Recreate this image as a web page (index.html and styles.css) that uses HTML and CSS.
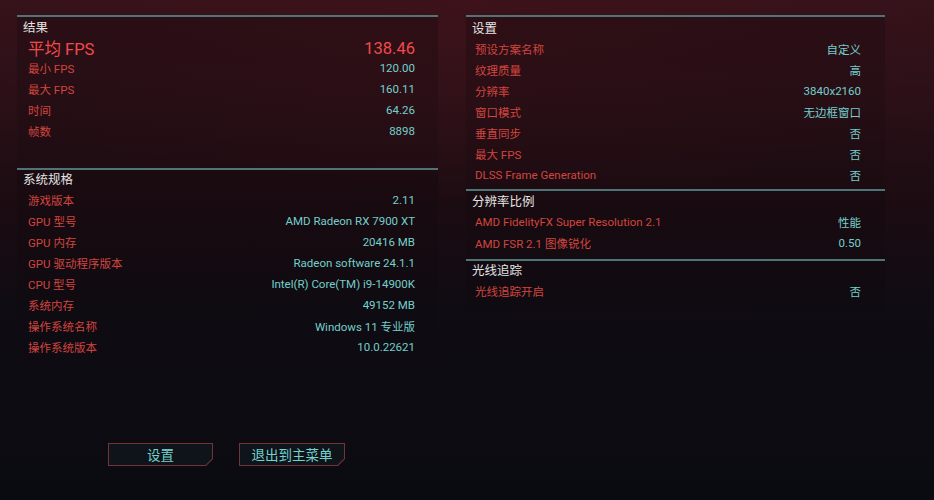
FILE: index.html
```html
<!DOCTYPE html>
<html lang="zh-CN">
<head>
<meta charset="utf-8">
<title>基准测试结果</title>
<link rel="stylesheet" href="styles.css">
</head>
<body>
<div class="page">
  <div class="columns">
    <div class="col col-left">
      <section class="sec sec-results">
        <div class="sec-head">结果</div>
        <div class="row row-big"><span class="lbl">平均 FPS</span><span class="val">138.46</span></div>
        <div class="row"><span class="lbl">最小 FPS</span><span class="val">120.00</span></div>
        <div class="row"><span class="lbl">最大 FPS</span><span class="val">160.11</span></div>
        <div class="row"><span class="lbl">时间</span><span class="val">64.26</span></div>
        <div class="row"><span class="lbl">帧数</span><span class="val">8898</span></div>
      </section>
      <section class="sec sec-specs">
        <div class="sec-head">系统规格</div>
        <div class="row"><span class="lbl">游戏版本</span><span class="val">2.11</span></div>
        <div class="row"><span class="lbl">GPU 型号</span><span class="val">AMD Radeon RX 7900 XT</span></div>
        <div class="row"><span class="lbl">GPU 内存</span><span class="val">20416 MB</span></div>
        <div class="row"><span class="lbl">GPU 驱动程序版本</span><span class="val">Radeon software 24.1.1</span></div>
        <div class="row"><span class="lbl">CPU 型号</span><span class="val">Intel(R) Core(TM) i9-14900K</span></div>
        <div class="row"><span class="lbl">系统内存</span><span class="val">49152 MB</span></div>
        <div class="row"><span class="lbl">操作系统名称</span><span class="val">Windows 11 专业版</span></div>
        <div class="row"><span class="lbl">操作系统版本</span><span class="val">10.0.22621</span></div>
      </section>
    </div>
    <div class="col col-right">
      <section class="sec sec-settings">
        <div class="sec-head">设置</div>
        <div class="row"><span class="lbl">预设方案名称</span><span class="val">自定义</span></div>
        <div class="row"><span class="lbl">纹理质量</span><span class="val">高</span></div>
        <div class="row"><span class="lbl">分辨率</span><span class="val">3840x2160</span></div>
        <div class="row"><span class="lbl">窗口模式</span><span class="val">无边框窗口</span></div>
        <div class="row"><span class="lbl">垂直同步</span><span class="val">否</span></div>
        <div class="row"><span class="lbl">最大 FPS</span><span class="val">否</span></div>
        <div class="row"><span class="lbl">DLSS Frame Generation</span><span class="val">否</span></div>
      </section>
      <section class="sec sec-scale">
        <div class="sec-head">分辨率比例</div>
        <div class="row"><span class="lbl">AMD FidelityFX Super Resolution 2.1</span><span class="val">性能</span></div>
        <div class="row"><span class="lbl">AMD FSR 2.1 图像锐化</span><span class="val">0.50</span></div>
      </section>
      <section class="sec sec-rt">
        <div class="sec-head">光线追踪</div>
        <div class="row"><span class="lbl">光线追踪开启</span><span class="val">否</span></div>
      </section>
    </div>
  </div>
  <div class="actions">
    <div class="btn"><span class="btn-in">设置</span></div>
    <div class="btn"><span class="btn-in">退出到主菜单</span></div>
  </div>
</div>
</body>
</html>
```
FILE: styles.css
```css
html, body {
  margin: 0;
  padding: 0;
  height: 100%;
}
body {
  background:
    radial-gradient(ellipse 70% 40% at 50% 0%, rgba(70, 18, 26, 0.55), rgba(70, 18, 26, 0) 100%),
    linear-gradient(180deg, #33121a 0%, #2a1017 18%, #1c0c12 40%, #0f0c13 62%, #0a0b11 100%);
  font-family: Roboto, "Noto Sans CJK SC", sans-serif;
  color: #e6e6e6;
  overflow: hidden;
}
.page {
  width: 934px;
  height: 500px;
  padding-top: 15px;
  box-sizing: border-box;
}
.columns {
  display: flex;
  gap: 28px;
  padding-left: 17px;
  height: 428px;
}
.col {
  display: flex;
  flex-direction: column;
}
.col-left { width: 421px; }
.col-right { width: 419px; }

.sec {
  border-top: 2px solid #4f7377;
  background: linear-gradient(180deg, rgba(12, 6, 10, 0.28), rgba(12, 6, 10, 0.12));
}
.sec-results { padding-bottom: 26px; }
.sec-specs { padding-bottom: 8px; }
.sec-settings { padding-bottom: 3px; }
.sec-scale { padding-bottom: 5px; }
.sec-rt { padding-bottom: 8px; }

.sec-head {
  height: 21px;
  line-height: 22px;
  padding-left: 6px;
  font-size: 12.5px;
  font-weight: 400;
  color: #e4e4e4;
}
.sec-specs .sec-head { height: 20px; line-height: 20px; }
.sec-settings .sec-head { height: 22px; line-height: 24px; }
.sec-rt .sec-head { height: 20px; line-height: 20px; }

.row {
  display: flex;
  justify-content: space-between;
  align-items: center;
  height: 21px;
  padding: 0 23px 2px 11px;
  box-sizing: border-box;
  font-size: 11.5px;
}
.col-right .row { padding-right: 24px; padding-left: 9px; }
.lbl { color: #d2453f; }
.val { color: #74cfcc; }
.row-big {
  height: 20px;
  padding-bottom: 0;
  font-size: 16.5px;
}
.row-big .lbl, .row-big .val { color: #f04a4b; }

.actions {
  display: flex;
  gap: 26px;
  padding-left: 108px;
}
.btn {
  width: 105px;
  height: 23px;
  padding: 1px;
  box-sizing: border-box;
  background: #713536;
  clip-path: polygon(0 0, 100% 0, 100% calc(100% - 7px), calc(100% - 7px) 100%, 0 100%);
}
.btn:last-child { width: 106px; }
.btn-in {
  display: flex;
  align-items: center;
  justify-content: center;
  height: 100%;
  padding-bottom: 2px;
  box-sizing: border-box;
  background: #0f131a;
  color: #72d2ce;
  font-size: 13.5px;
  clip-path: polygon(0 0, 100% 0, 100% calc(100% - 6.5px), calc(100% - 6.5px) 100%, 0 100%);
}
```
